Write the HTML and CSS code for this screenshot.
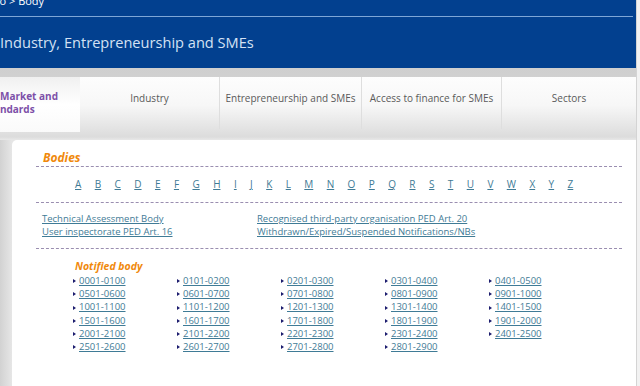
FILE: index.html
```html
<!DOCTYPE html>
<html lang="en">
<head>
  <meta charset="UTF-8">
  <title>Industry, Entrepreneurship and SMEs - Bodies</title>
  <link rel="stylesheet" href="styles.css">
</head>
<body>
  <div class="page">
    <div class="header">
      <div class="breadcrumb"><span class="crumb-cut">Portfolio</span> &gt; Body</div>
      <div class="title">Industry, Entrepreneurship and SMEs</div>
    </div>

    <div class="nav">
      <ul class="tabs">
        <li class="tab active"><span class="line">Market and</span><span class="line shift">Standards</span></li>
        <li class="tab">Industry</li>
        <li class="tab wide">Entrepreneurship and SMEs</li>
        <li class="tab">Access to finance for SMEs</li>
        <li class="tab last">Sectors</li>
      </ul>
    </div>

    <div class="main">
      <div class="panel">
        <h2 class="section-title">Bodies</h2>
        <div class="letters" id="letters"></div>

        <div class="quick-links">
          <a href="#">Technical Assessment Body</a>
          <a href="#">Recognised third-party organisation PED Art. 20</a>
          <a href="#">User inspectorate PED Art. 16</a>
          <a href="#">Withdrawn/Expired/Suspended Notifications/NBs</a>
        </div>

        <h3 class="sub-title">Notified body</h3>
        <ul class="ranges" id="ranges"></ul>
      </div>
    </div>
  </div>

  <script>
    const letters = document.getElementById('letters');
    'ABCDEFGHIJKLMNOPQRSTUVWXYZ'.split('').forEach(ch => {
      const a = document.createElement('a');
      a.href = '#';
      a.textContent = ch;
      letters.appendChild(a);
    });

    // notified body number ranges, 5 per row, up to 2900
    const ranges = document.getElementById('ranges');
    const pad = n => String(n).padStart(4, '0');
    for (let start = 1; start < 2900; start += 100) {
      const li = document.createElement('li');
      li.innerHTML = `<a href="#">${pad(start)}-${pad(start + 99)}</a>`;
      ranges.appendChild(li);
    }
  </script>
</body>
</html>
```

FILE: styles.css
```css
body {
  margin: 0;
  background: #f2f2f2;
  font-family: 'Open Sans', 'DejaVu Sans', sans-serif;
  overflow: hidden;
}
a {
  color: #3f7b96;
  text-decoration: underline;
}
.page {
  width: 636px;
  border-right: 1px solid #d4d4d4;
  background: #fff;
}
.header {
  display: flow-root;
  background: #02408f;
  height: 68px;
}
.breadcrumb {
  color: #fff;
  font-size: 11px;
  line-height: 12px;
  height: 11px;
  margin-top: -5px;
  padding-bottom: 10px;
  margin-right: 3px;
  border-bottom: 1px solid #7ea6d6;
  white-space: nowrap;
  overflow: hidden;
}
.crumb-cut {
  margin-left: -38px;
}
.title {
  height: 52px;
  display: flex;
  align-items: center;
  color: #d4e2f4;
  font-size: 14.6px;
  padding-bottom: 2px;
  box-sizing: border-box;
}
.nav {
  background: linear-gradient(#cfcfcf, #dadada);
  padding-top: 9px;
}
.tabs {
  list-style: none;
  margin: 0;
  padding: 0;
  display: flex;
  height: 63px;
  background: linear-gradient(#fdfdfd 0%, #f7f7f7 45%, #dcdcdc 95%, #e8e8e8 100%);
}
.tab {
  flex: 0 0 140px;
  box-sizing: border-box;
  padding-top: 14px;
  text-align: center;
  font-size: 10px;
  color: #5a5a5a;
  border-right: 1px solid #dedede;
  height: 52px;
}
.tab.wide {
  flex-basis: 142px;
}
.tab.last {
  flex: 1;
  border-right: none;
}
.tab.active {
  flex: 0 0 80px;
  height: 55px;
  background: linear-gradient(#f0f0f0, #fff 50%, #fafafa);
  border-right: none;
  color: #7d50a8;
  font-weight: bold;
  text-align: left;
  padding-top: 13px;
  overflow: hidden;
  white-space: nowrap;
  line-height: 13px;
}
.tab.active .line {
  display: block;
}
.tab.active .shift {
  margin-left: -16px;
}
.main {
  background: linear-gradient(90deg, #d2d2d2, #e6e6e6 12px);
  padding-left: 12px;
}
.panel {
  background: #fff;
  border-radius: 5px 0 0 0;
  padding: 10px 14px 40px 24px;
  min-height: 200px;
}
.section-title {
  margin: 0;
  padding-left: 7px;
  font-size: 12px;
  line-height: 16px;
  font-style: italic;
  font-weight: bold;
  color: #f0890c;
  border-bottom: 1px dashed #9a8eb0;
}
.letters {
  display: flex;
  gap: 13.4px;
  padding: 12px 0 12px 39px;
  font-size: 10px;
  line-height: 11px;
  border-bottom: 1px dashed #9a8eb0;
}
.quick-links {
  display: grid;
  grid-template-columns: 215px auto;
  padding: 9px 0 10px 6px;
  font-size: 9.5px;
  line-height: 13px;
  border-bottom: 1px dashed #9a8eb0;
}
.quick-links a {
  justify-self: start;
}
.sub-title {
  margin: 10px 0 0;
  padding-left: 39px;
  font-size: 10.5px;
  line-height: 14px;
  font-style: italic;
  font-weight: bold;
  color: #f0890c;
}
.ranges {
  list-style: none;
  margin: 1px 0 0;
  padding-left: 37px;
  display: grid;
  grid-template-columns: repeat(5, 104px);
  font-size: 9.5px;
  line-height: 13.2px;
}
.ranges li {
  display: flex;
  align-items: center;
}
.ranges li::before {
  content: "";
  border-left: 3px solid #1c1c6e;
  border-top: 2px solid transparent;
  border-bottom: 2px solid transparent;
  margin: 1px 3px 0 0;
}
```
